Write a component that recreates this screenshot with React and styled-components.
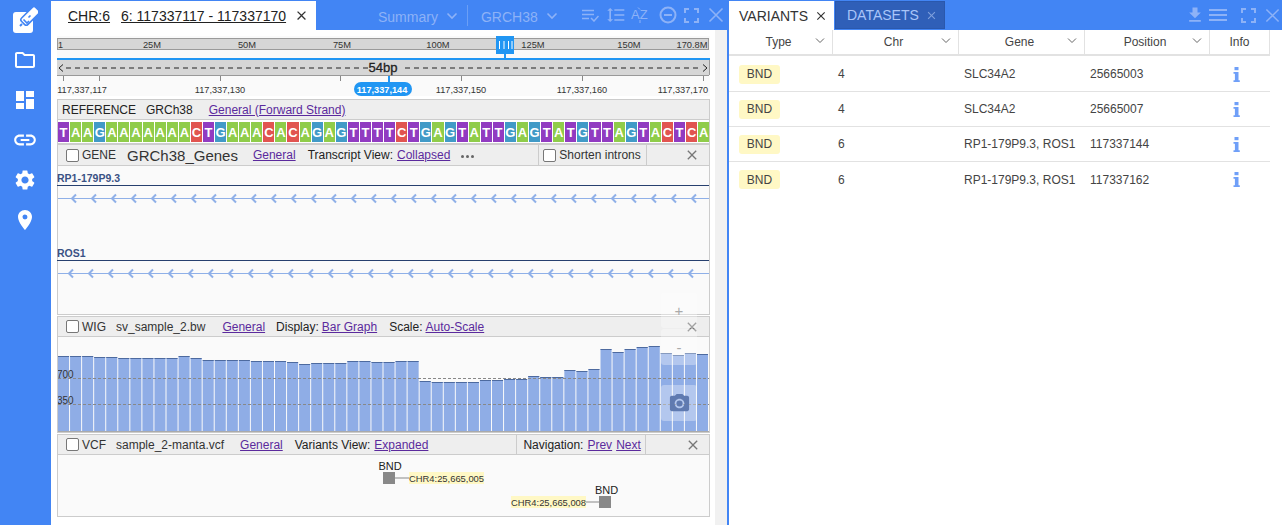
import React from "react";
import styled, { createGlobalStyle } from "styled-components";
import {
  MdOutlineFolder, MdDashboard, MdLink, MdSettings, MdLocationOn, MdCameraAlt,
  MdFileDownload, MdFormatLineSpacing, MdClose,
} from "react-icons/md";

const Global = createGlobalStyle`
  html, body { margin: 0; padding: 0; background: #fff; }
  body { font-family: "Liberation Sans", Arial, sans-serif; color: #333; }
  * { box-sizing: border-box; }
`;

const Page = styled.div`
  display: flex; width: 1282px; height: 525px; overflow: hidden; background: #fff;
`;
const Sidebar = styled.nav`
  width: 51px; flex: none; background: #4285f4; color: #fff;
  display: flex; flex-direction: column; align-items: center;
`;
const SideSlot = styled.div`
  width: 51px; height: 40px; display: flex; align-items: center; justify-content: center; margin-left: -1px;
`;
const LeftPanel = styled.section`
  width: 676px; flex: none; display: flex; flex-direction: column;
`;
const RightPanel = styled.section`
  flex: 1; min-width: 0; display: flex; flex-direction: column; border-left: 2px solid #4285f4;
`;
const TabBar = styled.div`
  height: 30px; flex: none; background: #4285f4; display: flex; align-items: flex-end; color: #8db2f7; position: relative;
`;
const ActiveTab = styled.div`
  height: 29px; width: ${p => p.$w}px; background: #fff; display: flex; align-items: center; color: #333;
  font-size: 14px; padding-left: ${p => p.$pl}px; flex: none;
`;
const InactiveTab = styled.div`
  height: 28px; width: 110px; margin-left: 1px; margin-bottom: 1px; background: #2f5fb8; border: 1px solid #2a58ad; color: #a9c5f8;
  font-size: 14px; display: flex; align-items: center; padding-left: 11px; flex: none;
`;
const Chr = styled.span`
  text-decoration: underline; color: #222; margin-right: ${p => p.$mr || 0}px; white-space: nowrap;
`;
const TabClose = styled(MdClose)`
  margin-left: ${p => p.$ml}px; color: ${p => p.$c || "#333"}; flex: none;
`;
const HeadTools = styled.div`
  height: 30px; display: flex; align-items: center; margin-left: ${p => p.$ml}px; font-size: 14px; flex: none;
`;
const HeadText = styled.span`
  padding-top: 3px;
`;
const ToolIcon = styled.svg`
  display: block; flex: none; margin-left: ${p => p.$ml || 0}px; margin-top: ${p => p.$mt || 0}px;
  fill: none; stroke: #8db2f7; stroke-width: 2;
`;
const LineSpacing = styled(MdFormatLineSpacing)`
  color: #8db2f7; margin-left: 7px; flex: none;
`;
const Divider = styled.span`
  width: 1px; height: 21px; background: #6b9ff6; margin: 0 13px 0 9px; flex: none;
`;
const Body = styled.div`
  flex: 1; display: flex; min-height: 0;
`;
const Content = styled.div`
  width: 664px; flex: none; padding: 6px 0 0 6px; background: #fff;
`;
const Splitter = styled.div`
  flex: 1; background: #f1f1f1;
`;
const RulerSvg = styled.svg`
  display: block; font-family: "Liberation Sans", Arial, sans-serif;
`;
const PlotSvg = styled.svg`
  display: block; font-family: "Liberation Sans", Arial, sans-serif;
`;
const Tracks = styled.div`
  position: relative; width: 653px; margin-top: 3px;
`;
const Track = styled.div`
  border: 1px solid #ccc; background: #fafafa; margin-top: ${p => p.$mt || 0}px; width: 653px;
`;
const TrackHead = styled.div`
  height: ${p => p.$h}px; background: #eee; border-bottom: 1px solid #ccc; display: flex; align-items: center;
  font-size: 12px; color: #333; white-space: nowrap; padding-left: ${p => p.$pl || 0}px;
`;
const Check = styled.span`
  width: 13px; height: 13px; background: #fff; border: 1px solid #777; border-radius: 2px; flex: none; display: block;
  margin-left: ${p => p.$ml || 0}px;
`;
const Label = styled.span`
  margin-left: ${p => p.$ml || 0}px; font-size: ${p => p.$fs || 12}px; color: ${p => p.$c || "#333"};
`;
const TrackLink = styled.span`
  margin-left: ${p => p.$ml || 0}px; color: #5b2a9d; text-decoration: underline;
`;
const Dots = styled.span`
  margin-left: 11px; display: flex; gap: 2px;
  i { width: 3px; height: 3px; border-radius: 50%; background: #666; display: block; margin-top: 2px; }
`;
const Sep = styled.span`
  width: 1px; align-self: stretch; background: #ccc; margin-left: ${p => p.$ml || 0}px; flex: none;
`;
const CloseX = styled(MdClose)`
  color: #777; flex: none; margin-left: ${p => p.$ml}px;
`;
const Sequence = styled.div`
  display: flex; padding: 2px 0 1px 0; background: #fff; height: 23px;
`;
const Base = styled.span`
  flex: 1; margin-right: 1px; background: ${p => p.$c}; color: #fff; font-size: 13px; font-weight: 700; opacity: .97;
  display: flex; align-items: center; justify-content: center;
  &:last-child { margin-right: 0; }
`;
const GeneBody = styled.div`
  height: 148px; padding-top: 6px;
`;
const GeneLabel = styled.div`
  height: 14px; border-bottom: 1px solid #27406f; color: #3a5285; font-size: 10.5px; font-weight: 700; line-height: 13px; margin-left: -1px; white-space: nowrap;
`;
const GeneLane = styled.svg`
  display: block; height: ${p => p.$h}px; width: 651px; overflow: visible;
`;
const WigBody = styled.div`
  height: 95px; background: #fafafa;
`;
const VcfBody = styled.div`
  height: 61px;
`;
const Overlay = styled.div`
  position: absolute; left: 604px; top: 194px; width: 36px; display: flex; flex-direction: column; gap: 1px; pointer-events: none;
`;
const OverlayBtn = styled.div`
  height: ${p => p.$h}px; background: rgba(255,255,255,.32); border-radius: 3px; margin-top: ${p => p.$mt || 0}px;
  display: flex; align-items: center; justify-content: center; color: #aaa; font-size: 15px;
  padding-bottom: ${p => p.$pb || 0}px;
`;
const CameraIcon = styled(MdCameraAlt)`
  color: #5f7ab0;
`;
const RightTools = styled.div`
  position: absolute; right: 2px; top: 0; height: 30px; display: flex; align-items: center;
`;
const Table = styled.div`
  display: flex; flex-direction: column; width: 541px; font-size: 12px; color: #444;
`;
const HeadRow = styled.div`
  display: grid; grid-template-columns: 104px 126px 126px 125px 60px; height: 26px; border-bottom: 2px solid #e2e2e2;
`;
const HeadCell = styled.div`
  position: relative; border-right: 1px solid #e2e2e2; display: flex; align-items: center; justify-content: center; padding-right: ${p => p.$pr || 0}px; color: #444;
`;
const Caret = styled.svg`
  position: absolute; right: 7px; top: 7px; fill: none; stroke: #666; stroke-width: 1;
`;
const Row = styled.div`
  display: grid; grid-template-columns: 104px 126px 126px 125px 60px; height: 35px; align-items: center;
  border-bottom: ${p => (p.$last ? "none" : "1px solid #e2e2e2")}; margin-top: ${p => (p.$first ? 1 : 0)}px;
`;
const Cell = styled.div`
  padding-left: 5px; white-space: nowrap; color: #444;
`;
const TypeCell = styled.div`
  padding-left: 10px;
`;
const Pill = styled.span`
  display: flex; width: 41px; height: 19px; background: #fff8c5; border-radius: 3px; align-items: center; justify-content: center; color: #444;
`;
const InfoCell = styled.div`
  display: flex; justify-content: flex-start; padding-left: 23px;
`;

const SEQ = "TAAGAAAAAAACTGAAACACAGAGTTTTCTGAGTATTGAGTATGTTAGTACTCA";
const COLORS = { T: "#8e35c0", A: "#8ccb45", G: "#3b97c6", C: "#e14f4b" };
const TOPS = [356,356,356,357,357,358,358,358,358,358,356,358,360,360,360,360,361,361,361,362,364,363,363,363,361,361,362,362,361,361,381,382,382,382,382,380,380,379,379,376,377,377,370,371,369,349,352,349,347,346,353,355,353,354];

function Logo() {
  return (
    <svg width="26" height="26" viewBox="0 0 26 26">
      <rect x="1" y="5" width="20" height="21" rx="3" fill="#fff" />
      <g transform="rotate(45 16 11)">
        <rect x="11.5" y="-2" width="9" height="20" rx="2.5" fill="#fff" stroke="#4285f4" strokeWidth="1.6" />
      </g>
      <path d="M8 19l2-2" stroke="#4285f4" strokeWidth="2" />
      <path d="M11.5 12.5l3.5 3.5 2-2M16.5 10.5l2-2" fill="none" stroke="#4285f4" strokeWidth="1.6" />
    </svg>
  );
}

function InfoGlyph() {
  return (
    <svg width="7" height="15" viewBox="0 0 7 15">
      <rect x="1.5" y="0" width="4" height="3.2" fill="#6f9ff8" />
      <path d="M0.5 5h5v8.2h1.3V15H0.5v-1.8h1.4V6.8H0.5z" fill="#6f9ff8" />
    </svg>
  );
}

function Caret14({ c = "#8db2f7", ml = 0 }) {
  return (
    <ToolIcon $ml={ml} $mt={2} width="12" height="8" viewBox="0 0 12 8" style={{ stroke: c, strokeWidth: 1.6 }}>
      <path d="M1.5 1.5L6 6l4.5-4.5" />
    </ToolIcon>
  );
}

function FullScreen({ ml }) {
  return (
    <ToolIcon $ml={ml} width="15" height="15" viewBox="0 0 15 15">
      <path d="M1 5V1h4M10 1h4v4M14 10v4h-4M5 14H1v-4" />
    </ToolIcon>
  );
}
function BigX({ ml, s = 16 }) {
  return (
    <ToolIcon $ml={ml} width={s} height={s} viewBox="0 0 16 16" style={{ strokeWidth: 1.6 }}>
      <path d="M1.5 1.5l13 13M14.5 1.5l-13 13" />
    </ToolIcon>
  );
}

function Ruler() {
  const labels = [[152,"25M"],[247,"50M"],[342,"75M"],[438,"100M"],[533,"125M"],[629,"150M"],[692,"170.8M"]];
  const ticks = [63,99,220,340,461,582,703];
  const pos = [[82,"117,337,117"],[220,"117,337,130"],[461,"117,337,150"],[582,"117,337,160"],[683,"117,337,170"]];
  const ox = 57, oy = 36;
  return (
    <RulerSvg width="653" height="60" viewBox={`${ox} ${oy} 653 60`}>
      <rect x={ox} y={oy} width="653" height="60" fill="#fafafa" />
      <rect x="57.5" y="38.5" width="651" height="11" fill="#d6d6d6" stroke="#9a9a9a" />
      <text x="58" y="48" fontSize="9" fill="#333">1</text>
      {labels.map(([x,t]) => <text key={t} x={x} y="48" textAnchor="middle" fontSize="9.3" fill="#333">{t}</text>)}
      <rect x="496" y="36" width="18" height="18" fill="#2196f3" />
      {[499.5,504,508.5,512].map(x => <line key={x} x1={x} x2={x} y1="41" y2="49" stroke="#fff" />)}
      <rect x="504" y="54" width="2" height="4" fill="#2196f3" />
      <rect x="57" y="58" width="653" height="2" fill="#2196f3" />
      <rect x="57" y="60" width="652" height="15" fill="#d6d6d6" />
      <line x1="57" x2="709" y1="75.5" y2="75.5" stroke="#999" />
      <line x1="709.5" x2="709.5" y1="60" y2="75" stroke="#999" />
      <line x1="66" x2="368" y1="68" y2="68" stroke="#222" strokeDasharray="5 4" />
      <line x1="405" x2="702" y1="68" y2="68" stroke="#222" strokeDasharray="5 4" />
      <path d="M63 64.5L59 68l4 3.5M703 64.5l4 3.5-4 3.5" fill="none" stroke="#222" />
      <text x="383" y="72" textAnchor="middle" fontSize="13" fill="#222" stroke="#222" strokeWidth=".3">54bp</text>
      {ticks.map(x => <line key={x} x1={x+.5} x2={x+.5} y1="76" y2="81" stroke="#888" />)}
      <line x1="389" x2="389" y1="76" y2="82" stroke="#2196f3" strokeWidth="2" />
      {pos.map(([x,t]) => <text key={t} x={x} y="93" textAnchor="middle" fontSize="9.2" fill="#333">{t}</text>)}
      <rect x="354" y="82" width="58" height="14" rx="7" fill="#2196f3" />
      <text x="382" y="93" textAnchor="middle" fontSize="9.2" fontWeight="700" fill="#fff">117,337,144</text>
    </RulerSvg>
  );
}

function Intron({ h, y, start }) {
  const xs = [];
  for (let x = start; x < 651; x += 20) xs.push(x);
  return (
    <GeneLane $h={h} viewBox={`0 0 651 ${h}`}>
      <line x1="0" x2="651" y1={y} y2={y} stroke="#8fb0e8" />
      {xs.map(x => <path key={x} d={`M${x+3} ${y-4}L${x-1} ${y}l4 4`} fill="none" stroke="#8fb0e8" strokeWidth="2" />)}
    </GeneLane>
  );
}

function Wig() {
  const w = 651 / 54;
  const top0 = 337;
  return (
    <PlotSvg width="651" height="95" viewBox="0 0 651 95">
      {TOPS.map((t, i) => (
        <g key={i}>
          <rect x={i * w} y={t - top0} width={w - 1} height={95 - (t - top0)} fill="#8fade6" />
          <rect x={i * w} y={t - top0} width={w - 1} height="1" fill="#4d6a9f" />
        </g>
      ))}
      <rect x="0" y="94" width="651" height="1" fill="#aaa" />
      <line x1="0" x2="651" y1="41.5" y2="41.5" stroke="#888" strokeDasharray="3 2" />
      <line x1="0" x2="651" y1="67.5" y2="67.5" stroke="#888" strokeDasharray="3 2" />
      <text x="-1" y="41" fontSize="10" fill="#333">700</text>
      <text x="-1" y="67" fontSize="10" fill="#333">350</text>
    </PlotSvg>
  );
}

function Vcf() {
  const ox = 58, oy = 455;
  return (
    <PlotSvg width="651" height="61" viewBox={`${ox} ${oy} 651 61`}>
      <text x="390" y="470" textAnchor="middle" fontSize="11" fill="#222">BND</text>
      <rect x="383" y="472" width="12" height="12" fill="#888" />
      <line x1="395" x2="410" y1="478" y2="478" stroke="#888" />
      <rect x="409" y="472" width="75" height="12" fill="#fff8c5" />
      <text x="409" y="482" fontSize="9.4" fill="#333">CHR4:25,665,005</text>
      <text x="606.5" y="494" textAnchor="middle" fontSize="11" fill="#222">BND</text>
      <rect x="599" y="496" width="12" height="12" fill="#888" />
      <line x1="585" x2="599" y1="502" y2="502" stroke="#888" />
      <rect x="511" y="496" width="75" height="12" fill="#fff8c5" />
      <text x="511" y="506" fontSize="9.4" fill="#333">CHR4:25,665,008</text>
    </PlotSvg>
  );
}

const ROWS = [
  ["4", "SLC34A2", "25665003"],
  ["4", "SLC34A2", "25665007"],
  ["6", "RP1-179P9.3, ROS1", "117337144"],
  ["6", "RP1-179P9.3, ROS1", "117337162"],
];

function HeadCaret() {
  return (
    <Caret width="10" height="8" viewBox="0 0 10 8"><path d="M1 1.5l4 4 4-4" /></Caret>
  );
}

export default function App() {
  return (
    <Page>
      <Global />
      <Sidebar>
        <SideSlot><Logo /></SideSlot>
        <SideSlot><MdOutlineFolder size={24} /></SideSlot>
        <SideSlot><MdDashboard size={24} /></SideSlot>
        <SideSlot><MdLink size={26} /></SideSlot>
        <SideSlot><MdSettings size={24} /></SideSlot>
        <SideSlot><MdLocationOn size={24} /></SideSlot>
      </Sidebar>

      <LeftPanel>
        <TabBar>
          <ActiveTab $w={265} $pl={17}>
            <Chr $mr={11}>CHR:6</Chr>
            <Chr>6: 117337117 - 117337170</Chr>
            <TabClose size={15} $ml={8} />
          </ActiveTab>
          <HeadTools $ml={62}>
            <HeadText>Summary</HeadText>
            <Caret14 ml={8} />
            <Divider />
            <HeadText>GRCH38</HeadText>
            <Caret14 ml={8} />
            <ToolIcon $ml={24} width="17" height="13" viewBox="0 0 17 13" style={{ strokeWidth: 1.5 }}>
              <path d="M0 1.5h12M0 5.5h12M0 9.5h7M9 9l3 3 4.5-5" />
            </ToolIcon>
            <LineSpacing size={20} />
            <ToolIcon $ml={5} width="18" height="16" viewBox="0 0 18 16" style={{ strokeWidth: 1 }}>
              <text x="0" y="12" fontSize="13" fill="#8db2f7" stroke="none" fontFamily="Liberation Sans">AZ</text>
              <path d="M7 0.5l2 2M9 13v3" />
            </ToolIcon>
            <ToolIcon $ml={10} width="18" height="18" viewBox="0 0 18 18"><circle cx="9" cy="9" r="7.5" /><path d="M5 9h8" /></ToolIcon>
            <FullScreen ml={7} />
            <BigX ml={9} />
          </HeadTools>
        </TabBar>
        <Body>
          <Content>
            <Ruler />
            <Tracks>
              <Track>
                <TrackHead $h={20} $pl={4}>
                  <Label $c="#222">REFERENCE</Label>
                  <Label $ml={10} $c="#222">GRCh38</Label>
                  <TrackLink $ml={16}>General (Forward Strand)</TrackLink>
                </TrackHead>
                <Sequence>
                  {SEQ.split("").map((b, i) => <Base key={i} $c={COLORS[b]}>{b}</Base>)}
                </Sequence>
              </Track>
              <Track>
                <TrackHead $h={21} $pl={8}>
                  <Check />
                  <Label $ml={3}>GENE</Label>
                  <Label $ml={11} $fs={15}>GRCh38_Genes</Label>
                  <TrackLink $ml={15}>General</TrackLink>
                  <Label $ml={12} $c="#222">Transcript View:</Label>
                  <TrackLink $ml={4}>Collapsed</TrackLink>
                  <Dots><i /><i /><i /></Dots>
                  <Sep $ml={64} />
                  <Check $ml={4} />
                  <Label $ml={3}>Shorten introns</Label>
                  <Sep $ml={5} />
                  <CloseX size={16} $ml={37} />
                </TrackHead>
                <GeneBody>
                  <GeneLabel>RP1-179P9.3</GeneLabel>
                  <Intron h={61} y={12.5} start={15} />
                  <GeneLabel>ROS1</GeneLabel>
                  <Intron h={60} y={12.5} start={12} />
                </GeneBody>
              </Track>
              <Track $mt={1}>
                <TrackHead $h={20} $pl={8}>
                  <Check />
                  <Label $ml={3}>WIG</Label>
                  <Label $ml={10}>sv_sample_2.bw</Label>
                  <TrackLink $ml={17}>General</TrackLink>
                  <Label $ml={11} $c="#222">Display:</Label>
                  <TrackLink $ml={3}>Bar Graph</TrackLink>
                  <Label $ml={12} $c="#222">Scale:</Label>
                  <TrackLink $ml={3}>Auto-Scale</TrackLink>
                  <CloseX size={16} $ml={200} />
                </TrackHead>
                <WigBody><Wig /></WigBody>
              </Track>
              <Track $mt={1}>
                <TrackHead $h={20} $pl={8}>
                  <Check />
                  <Label $ml={3}>VCF</Label>
                  <Label $ml={10}>sample_2-manta.vcf</Label>
                  <TrackLink $ml={16}>General</TrackLink>
                  <Label $ml={12} $c="#222">Variants View:</Label>
                  <TrackLink $ml={4}>Expanded</TrackLink>
                  <Sep $ml={88} />
                  <Label $ml={6} $c="#222">Navigation:</Label>
                  <TrackLink $ml={4}>Prev</TrackLink>
                  <TrackLink $ml={4}>Next</TrackLink>
                  <Sep $ml={4} />
                  <CloseX size={16} $ml={39} />
                </TrackHead>
                <VcfBody><Vcf /></VcfBody>
              </Track>
              <Overlay>
                <OverlayBtn $h={35} $pb={1}>+</OverlayBtn>
                <OverlayBtn $h={36}>-</OverlayBtn>
                <OverlayBtn $h={36} $mt={19}><CameraIcon size={23} /></OverlayBtn>
              </Overlay>
            </Tracks>
          </Content>
          <Splitter />
        </Body>
      </LeftPanel>

      <RightPanel>
        <TabBar>
          <ActiveTab $w={105} $pl={10}>
            VARIANTS
            <TabClose size={14} $ml={6} />
          </ActiveTab>
          <InactiveTab>
            DATASETS
            <TabClose size={13} $ml={6} $c="#7fa0dc" />
          </InactiveTab>
          <RightTools>
            <MdFileDownload size={20} color="#8db2f7" />
            <ToolIcon $ml={4} width="18" height="14" viewBox="0 0 18 14"><path d="M0 2h18M0 7h18M0 12h18" /></ToolIcon>
            <FullScreen ml={14} />
            <BigX ml={9} s={15} />
          </RightTools>
        </TabBar>
        <Table>
          <HeadRow>
            <HeadCell $pr={4}>Type<HeadCaret /></HeadCell>
            <HeadCell $pr={4}>Chr<HeadCaret /></HeadCell>
            <HeadCell $pr={4}>Gene<HeadCaret /></HeadCell>
            <HeadCell $pr={4}>Position<HeadCaret /></HeadCell>
            <HeadCell>Info</HeadCell>
          </HeadRow>
          {ROWS.map((r, i) => (
            <Row key={i} $first={i === 0} $last={i === 3}>
              <TypeCell><Pill>BND</Pill></TypeCell>
              <Cell>{r[0]}</Cell>
              <Cell>{r[1]}</Cell>
              <Cell>{r[2]}</Cell>
              <InfoCell><InfoGlyph /></InfoCell>
            </Row>
          ))}
        </Table>
      </RightPanel>
    </Page>
  );
}
